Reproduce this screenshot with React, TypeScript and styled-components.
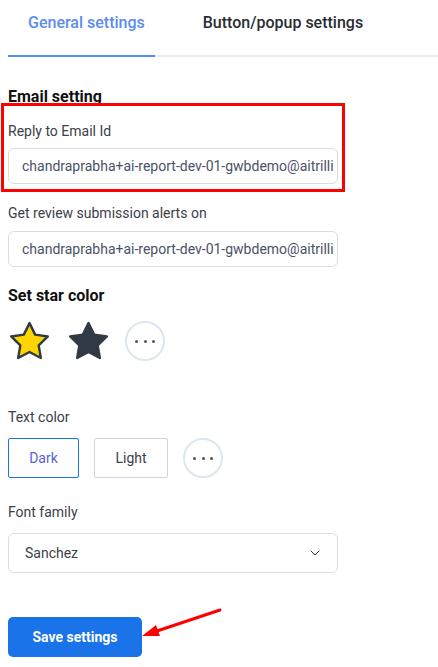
import React from "react";
import styled, { createGlobalStyle } from "styled-components";
import { ChevronDown } from "lucide-react";

const Global = createGlobalStyle`
  html, body { margin: 0; padding: 0; background: #fff; }
  body { font-family: Roboto, "Noto Sans", Arial, sans-serif; color: #2d2f33; }
  * { box-sizing: border-box; }
`;

const Page = styled.div`
  width: 438px;
  padding: 0 0 0 8px;
`;

const TabBar = styled.div`
  display: flex;
  gap: 28px;
  border-bottom: 2px solid #ebebf0;
  height: 57px;
`;

const Tab = styled.div<{ $active?: boolean }>`
  padding: 14px 10px 0 20px;
  font-size: 16px;
  font-weight: 500;
  line-height: 18px;
  color: ${(p) => (p.$active ? "#5b8def" : "#2a2d33")};
  border-bottom: 2px solid ${(p) => (p.$active ? "#4f8ef7" : "transparent")};
  height: 57px;
  margin-bottom: -2px;
`;

const Content = styled.div`
  width: 330px;
  display: flex;
  flex-direction: column;
`;

const Heading = styled.h3<{ $mt: number }>`
  margin: ${(p) => p.$mt}px 0 0;
  font-size: 16px;
  font-weight: 700;
  line-height: 20px;
  color: #111;
`;

const Label = styled.div<{ $mt: number }>`
  margin-top: ${(p) => p.$mt}px;
  font-size: 14px;
  line-height: 16px;
  font-weight: 400;
  color: #3c4049;
`;

const Field = styled.div`
  position: relative;
  display: flex;
  flex-direction: column;
`;

const Highlight = styled.div`
  position: absolute;
  top: -4px;
  left: -7px;
  right: -7px;
  bottom: -8px;
  border: 3px solid #f00;
  pointer-events: none;
`;

const Input = styled.div<{ $mt: number }>`
  margin-top: ${(p) => p.$mt}px;
  height: 36px;
  width: 330px;
  border: 1px solid #dcdcdf;
  border-radius: 6px;
  padding: 0 13px;
  display: flex;
  align-items: center;
  font-size: 14px;
  color: #4a5266;
  white-space: nowrap;
  overflow: hidden;
`;

const StarRow = styled.div`
  margin-top: 14px;
  display: flex;
  align-items: center;
  height: 42px;
`;

const StarBox = styled.div<{ $ml: number }>`
  margin-left: ${(p) => p.$ml}px;
  display: flex;
`;

const MoreCircle = styled.div<{ $ml: number }>`
  margin-left: ${(p) => p.$ml}px;
  width: 40px;
  height: 40px;
  border-radius: 50%;
  border: 2px solid #dde6ee;
  display: flex;
  align-items: center;
  justify-content: center;
  gap: 5.5px;
`;

const Dot = styled.span`
  width: 3px;
  height: 3px;
  border-radius: 50%;
  background: #4a5568;
`;

const ButtonRow = styled.div`
  margin-top: 13px;
  display: flex;
  align-items: center;
  gap: 15px;
`;

const ChoiceButton = styled.div<{ $active?: boolean; $w: number }>`
  width: ${(p) => p.$w}px;
  height: 40px;
  border: 1px solid ${(p) => (p.$active ? "#1a73e8" : "#ccd5de")};
  border-radius: 2px;
  display: flex;
  align-items: center;
  justify-content: center;
  font-size: 14px;
  color: ${(p) => (p.$active ? "#5960dc" : "#3c4049")};
`;

const Select = styled.div`
  margin-top: 13px;
  height: 40px;
  width: 330px;
  border: 1px solid #dcdcdf;
  border-radius: 6px;
  padding: 0 14px 0 16px;
  display: flex;
  align-items: center;
  justify-content: space-between;
  font-size: 14px;
  color: #3c4049;
`;

const SaveWrap = styled.div`
  position: relative;
  margin-top: 44px;
`;

const SaveButton = styled.button`
  width: 134px;
  height: 40px;
  border: none;
  border-radius: 5px;
  background: #1a73e8;
  color: #fff;
  font-family: Roboto, Arial, sans-serif;
  font-size: 14px;
  font-weight: 700;
  cursor: pointer;
`;

const Arrow = styled.svg`
  position: absolute;
  left: 126px;
  top: -12px;
  overflow: visible;
`;

const StarIcon = ({ fill }: { fill: string }) => (
  <svg width="45" height="45" viewBox="0 0 24 24">
    <path
      d="M12 2.2l3.02 6.12 6.76.98-4.89 4.77 1.15 6.73L12 17.62l-6.04 3.18 1.15-6.73L2.22 9.3l6.76-.98L12 2.2z"
      fill={fill}
      stroke="#323a45"
      strokeWidth="1.3"
      strokeLinejoin="round"
    />
  </svg>
);

export default function App() {
  return (
    <Page>
      <Global />
      <TabBar>
        <Tab $active>General settings</Tab>
        <Tab>Button/popup settings</Tab>
      </TabBar>
      <Content>
        <Heading $mt={30}>Email setting</Heading>
        <Field>
          <Highlight />
          <Label $mt={16}>Reply to Email Id</Label>
          <Input $mt={9}>chandraprabha+ai-report-dev-01-gwbdemo@aitrilli</Input>
        </Field>
        <Label $mt={21}>Get review submission alerts on</Label>
        <Input $mt={10}>chandraprabha+ai-report-dev-01-gwbdemo@aitrilli</Input>

        <Heading $mt={19}>Set star color</Heading>
        <StarRow>
          <StarBox $ml={-1}>
            <StarIcon fill="#ffd500" />
          </StarBox>
          <StarBox $ml={14}>
            <StarIcon fill="#2f3a46" />
          </StarBox>
          <MoreCircle $ml={14}>
            <Dot />
            <Dot />
            <Dot />
          </MoreCircle>
        </StarRow>

        <Label $mt={47}>Text color</Label>
        <ButtonRow>
          <ChoiceButton $active $w={71}>Dark</ChoiceButton>
          <ChoiceButton $w={74}>Light</ChoiceButton>
          <MoreCircle $ml={0}>
            <Dot />
            <Dot />
            <Dot />
          </MoreCircle>
        </ButtonRow>

        <Label $mt={26}>Font family</Label>
        <Select>
          <span>Sanchez</span>
          <ChevronDown size={16} strokeWidth={1.5} color="#333" />
        </Select>

        <SaveWrap>
          <SaveButton>Save settings</SaveButton>
          <Arrow width="100" height="40">
            <line x1="86" y1="5" x2="20" y2="27" stroke="#f00" strokeWidth="3" strokeLinecap="round" />
            <polygon points="8,31 22,20 26,31" fill="#f00" />
          </Arrow>
        </SaveWrap>
      </Content>
    </Page>
  );
}
